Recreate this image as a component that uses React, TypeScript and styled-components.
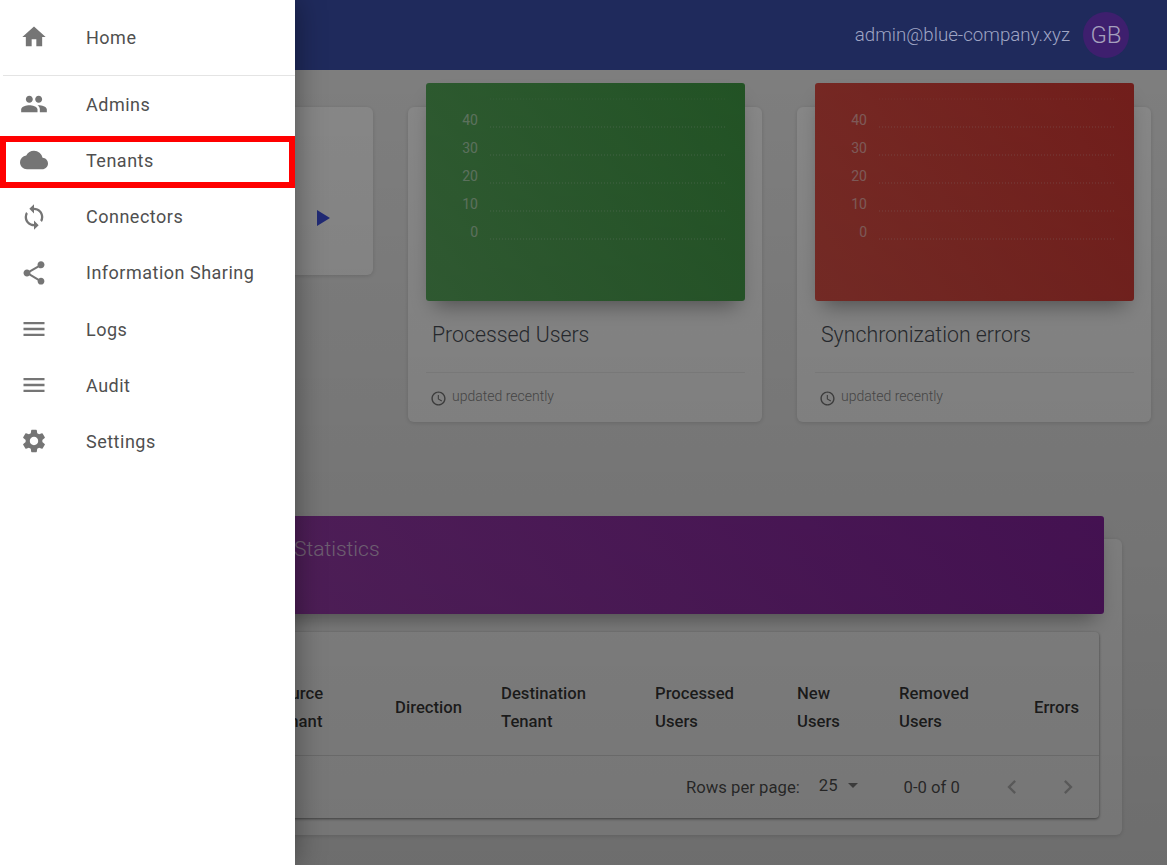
import { FC, ReactNode } from "react";
import styled, { createGlobalStyle } from "styled-components";
import {
  MdAccessTime,
  MdArrowDropDown,
  MdChevronLeft,
  MdChevronRight,
  MdCloud,
  MdHome,
  MdMenu,
  MdPeople,
  MdSettings,
  MdShare,
  MdSync,
} from "react-icons/md";

const GRID_VALUES = [40, 30, 20, 10, 0];

const menuItems: { label: string; icon: ReactNode; marked?: boolean }[] = [
  { label: "Admins", icon: <MdPeople /> },
  { label: "Tenants", icon: <MdCloud />, marked: true },
  { label: "Connectors", icon: <MdSync /> },
  { label: "Information Sharing", icon: <MdShare /> },
  { label: "Logs", icon: <MdMenu /> },
  { label: "Audit", icon: <MdMenu /> },
  { label: "Settings", icon: <MdSettings /> },
];

const columns = [
  ["Source", "Tenant"],
  ["Direction"],
  ["Destination", "Tenant"],
  ["Processed", "Users"],
  ["New", "Users"],
  ["Removed", "Users"],
  ["Errors"],
];

const Chart: FC = () => (
  <svg width="319" height="218" viewBox="0 0 319 218">
    <line x1="64" x2="301" y1="16" y2="16" stroke="rgba(255,255,255,0.12)" strokeDasharray="1 2" />
    {GRID_VALUES.map((value, index) => (
      <g key={value}>
        <text
          x="52"
          y={42 + index * 28}
          textAnchor="end"
          fontFamily="Roboto, sans-serif"
          fontSize="14"
          fill="rgba(255,255,255,0.55)"
        >
          {value}
        </text>
        <line
          x1="64"
          x2="301"
          y1={44 + index * 28}
          y2={44 + index * 28}
          stroke="rgba(255,255,255,0.3)"
          strokeDasharray="1 2"
        />
      </g>
    ))}
  </svg>
);

const StatCard: FC<{ title: string; tone: "green" | "red" }> = ({ title, tone }) => (
  <Card>
    <ChartHeader $tone={tone}>
      <Chart />
    </ChartHeader>
    <CardTitle>{title}</CardTitle>
    <CardFooter>
      <MdAccessTime />
      <span>updated recently</span>
    </CardFooter>
  </Card>
);

const App: FC = () => (
  <Screen>
    <GlobalStyle />
    <AppBar>
      <UserMail>admin@blue-company.xyz</UserMail>
      <Avatar>GB</Avatar>
    </AppBar>
    <Main>
      <CardRow>
        <ActionCard>
          <PlayMark />
        </ActionCard>
        <StatCard title="Processed Users" tone="green" />
        <StatCard title="Synchronization errors" tone="red" />
      </CardRow>
      <TableCard>
        <TableBanner>Statistics</TableBanner>
        <TablePaper>
          <HeadRow>
            {columns.map((lines) => (
              <HeadCell key={lines.join(" ")}>
                {lines.map((line) => (
                  <div key={line}>{line}</div>
                ))}
              </HeadCell>
            ))}
          </HeadRow>
          <Pagination>
            <span>Rows per page:</span>
            <PageSize>
              25
              <MdArrowDropDown />
            </PageSize>
            <PageRange>0-0 of 0</PageRange>
            <PageButtons>
              <MdChevronLeft />
              <MdChevronRight />
            </PageButtons>
          </Pagination>
        </TablePaper>
      </TableCard>
    </Main>
    <Backdrop />
    <Drawer>
      <HomeList>
        <MenuItem>
          <MdHome />
          <span>Home</span>
        </MenuItem>
      </HomeList>
      <DrawerDivider />
      {menuItems.map((item) => (
        <MenuItem key={item.label} $marked={item.marked}>
          {item.icon}
          <span>{item.label}</span>
        </MenuItem>
      ))}
    </Drawer>
  </Screen>
);

export default App;

const GlobalStyle = createGlobalStyle`
  html, body {
    margin: 0;
    padding: 0;
    height: 865px;
    overflow: hidden;
  }
  body {
    font-family: Roboto, "Liberation Sans", sans-serif;
  }
`;

const Screen = styled.div`
  position: relative;
  width: 1167px;
  height: 865px;
  overflow: hidden;
  background-color: #eeeeee;
`;

const AppBar = styled.header`
  position: relative;
  z-index: 2;
  display: flex;
  align-items: center;
  justify-content: flex-end;
  gap: 13px;
  height: 70px;
  padding: 0 38px 0 0;
  box-sizing: border-box;
  background-color: #1f2a5c;
`;

const UserMail = styled.span`
  font-size: 18.7px;
  font-weight: 300;
  color: #9fa5c4;
`;

const Avatar = styled.div`
  display: flex;
  align-items: center;
  justify-content: center;
  width: 46px;
  height: 46px;
  margin-top: -1px;
  border-radius: 50%;
  background-color: #3e1f6e;
  color: #a5a0bd;
  font-size: 24px;
  font-weight: 300;
`;

const Main = styled.main`
  padding: 37px 16px 0 19px;
`;

const CardRow = styled.div`
  display: flex;
  align-items: flex-start;
  gap: 35px;
`;

const Card = styled.section`
  width: 354px;
  height: 315px;
  box-sizing: border-box;
  border-radius: 6px;
  background-color: #ffffff;
  box-shadow: 0 1px 4px rgba(0, 0, 0, 0.14);
`;

const ActionCard = styled(Card)`
  display: flex;
  justify-content: flex-end;
  height: 168px;
  padding: 103px 43px 0 0;
`;

const PlayMark = styled.div`
  width: 0;
  height: 0;
  border-left: 13px solid #3f51e0;
  border-top: 8.5px solid transparent;
  border-bottom: 8.5px solid transparent;
`;

const ChartHeader = styled.div<{ $tone: "green" | "red" }>`
  height: 218px;
  margin: -24px 17px 0 18px;
  border-radius: 3px;
  background: ${({ $tone }) =>
    $tone === "green"
      ? "linear-gradient(60deg, #5cad60, #409c45)"
      : "linear-gradient(60deg, #e05248, #d63833)"};
  box-shadow: 0 12px 20px -8px rgba(0, 0, 0, 0.4);

  svg {
    display: block;
  }
`;

const CardTitle = styled.h3`
  margin: 20px 0 23px 24px;
  font-size: 21.3px;
  line-height: 28px;
  font-weight: 300;
  color: #4a4f57;
`;

const CardFooter = styled.div`
  display: flex;
  align-items: center;
  gap: 5px;
  margin: 0 17px 0 18px;
  padding: 14px 0 0 4px;
  border-top: 1px solid #eeeeee;
  font-size: 14px;
  font-weight: 300;
  color: #8a8a8a;

  span {
    margin-bottom: 2px;
  }

  svg {
    width: 17px;
    height: 17px;
    margin-top: 3px;
    color: #777777;
  }
`;

const TableCard = styled.section`
  display: flex;
  flex-direction: column;
  height: 296px;
  margin: 117px 29px 0 0;
  box-sizing: border-box;
  border-radius: 6px;
  background-color: #ffffff;
  box-shadow: 0 1px 4px rgba(0, 0, 0, 0.14);
`;

const TableBanner = styled.div`
  height: 98px;
  margin: -23px 18px 0 18px;
  padding: 19px 0 0 257px;
  box-sizing: border-box;
  border-radius: 3px;
  background: linear-gradient(60deg, #a445b5, #8a23a5);
  box-shadow: 0 12px 20px -8px rgba(0, 0, 0, 0.4);
  color: rgba(255, 255, 255, 0.7);
  font-size: 21px;
  line-height: 28px;
  font-weight: 300;
`;

const TablePaper = styled.div`
  height: 186px;
  margin: 18px 23px 0 23px;
  border-radius: 4px;
  background-color: #ffffff;
  box-shadow: 0 1px 3px rgba(0, 0, 0, 0.5);
`;

const HeadRow = styled.div`
  display: grid;
  grid-template-columns: 124px 106px 154px 142px 102px 135px auto;
  align-items: center;
  height: 124px;
  padding: 29px 0 0 229px;
  box-sizing: border-box;
  border-bottom: 1px solid #e0e0e0;
`;

const HeadCell = styled.div`
  font-size: 16.7px;
  line-height: 28px;
  font-weight: 500;
  color: rgba(0, 0, 0, 0.78);
`;

const Pagination = styled.div`
  display: flex;
  align-items: center;
  height: 62px;
  padding-left: 644px;
  font-size: 16.7px;
  color: rgba(0, 0, 0, 0.7);
`;

const PageSize = styled.div`
  display: flex;
  align-items: center;
  margin: -4px 0 0 19px;

  svg {
    width: 24px;
    height: 24px;
    margin-left: 3px;
    color: rgba(0, 0, 0, 0.5);
  }
`;

const PageRange = styled.span`
  margin-left: 39px;
`;

const PageButtons = styled.div`
  display: flex;
  gap: 28px;
  margin-left: 38px;
  color: rgba(0, 0, 0, 0.26);

  svg {
    width: 28px;
    height: 28px;
  }
`;

const Backdrop = styled.div`
  position: absolute;
  inset: 70px 0 0 0;
  z-index: 1;
  background: linear-gradient(180deg, rgba(0, 0, 0, 0.47), rgba(0, 0, 0, 0.54));
`;

const Drawer = styled.nav`
  position: absolute;
  top: 0;
  left: 0;
  bottom: 0;
  z-index: 3;
  width: 295px;
  background-color: #ffffff;
  box-shadow: 0 0 28px rgba(0, 0, 0, 0.4);
`;

const HomeList = styled.div`
  padding: 9px 0 10px;
`;

const DrawerDivider = styled.hr`
  height: 1px;
  margin: 0 0 0 3px;
  border: 0;
  background-color: #e4e4e4;
`;

const MenuItem = styled.div<{ $marked?: boolean }>`
  position: relative;
  display: flex;
  align-items: center;
  gap: 38px;
  height: 56.2px;
  padding-left: 20px;
  color: #4f4f4f;
  font-size: 18px;
  letter-spacing: 0.5px;

  svg {
    width: 28px;
    height: 28px;
    color: #757575;
  }

  ${({ $marked }) =>
    $marked &&
    `
    &::after {
      content: "";
      position: absolute;
      inset: 4px 0 1px 0;
      border: 6px solid #ff0000;
    }
  `}
`;
